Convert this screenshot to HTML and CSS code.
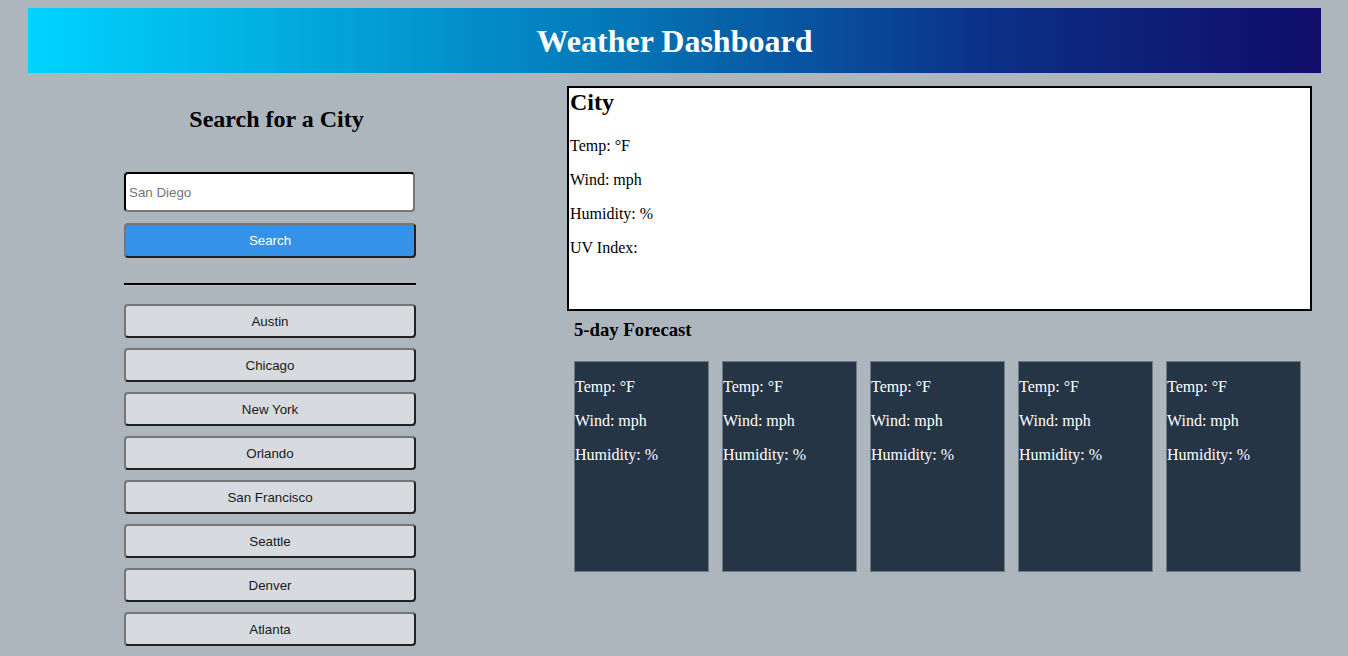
FILE: index.html
```html
<!DOCTYPE html>
<html lang="en">
<head>
<meta charset="utf-8">
<title>Weather Dashboard</title>
<link rel="stylesheet" href="styles.css">
</head>
<body>
<header class="banner">
  <h1 class="banner-title">Weather Dashboard</h1>
</header>
<main class="layout">
  <aside class="sidebar">
    <h2 class="sidebar-title">Search for a City</h2>
    <div class="search-panel">
      <input class="city-input" type="text" placeholder="San Diego">
      <button class="search-btn">Search</button>
      <hr class="divider">
      <div class="history">
        <button class="city-btn">Austin</button>
        <button class="city-btn">Chicago</button>
        <button class="city-btn">New York</button>
        <button class="city-btn">Orlando</button>
        <button class="city-btn">San Francisco</button>
        <button class="city-btn">Seattle</button>
        <button class="city-btn">Denver</button>
        <button class="city-btn">Atlanta</button>
      </div>
    </div>
  </aside>
  <section class="content">
    <div class="current">
      <h2 class="current-city">City</h2>
      <p class="stat">Temp: °F</p>
      <p class="stat">Wind: mph</p>
      <p class="stat">Humidity: %</p>
      <p class="stat">UV Index:</p>
    </div>
    <h3 class="forecast-title">5-day Forecast</h3>
    <div class="forecast">
      <div class="day-card"><p class="stat">Temp: °F</p><p class="stat">Wind: mph</p><p class="stat">Humidity: %</p></div>
      <div class="day-card"><p class="stat">Temp: °F</p><p class="stat">Wind: mph</p><p class="stat">Humidity: %</p></div>
      <div class="day-card"><p class="stat">Temp: °F</p><p class="stat">Wind: mph</p><p class="stat">Humidity: %</p></div>
      <div class="day-card"><p class="stat">Temp: °F</p><p class="stat">Wind: mph</p><p class="stat">Humidity: %</p></div>
      <div class="day-card"><p class="stat">Temp: °F</p><p class="stat">Wind: mph</p><p class="stat">Humidity: %</p></div>
    </div>
  </section>
</main>
</body>
</html>
```
FILE: styles.css
```css
html, body {
  background: #adb5bd;
}
body {
  margin: 8px 0;
  font-family: "Liberation Serif", "Times New Roman", serif;
  color: #000;
}
.banner {
  margin: 0 27px 0 28px;
  height: 65px;
  display: flex;
  align-items: center;
  justify-content: center;
  background: linear-gradient(90deg, #00d4ff 0%, #0478b8 45%, #0b2f86 75%, #100c6a 100%);
}
.banner-title {
  margin: 2px 0 0;
  color: #fff;
  font-size: 32px;
  font-weight: bold;
}
.layout {
  display: flex;
  padding-left: 28px;
}
.sidebar {
  width: 497px;
  flex: none;
  padding-top: 12px;
}
.sidebar-title {
  text-align: center;
  font-size: 24px;
  margin: 20px 0 0;
  line-height: 28px;
}
.search-panel {
  margin-left: 96px;
  width: 292px;
  padding-top: 39px;
}
.city-input {
  display: block;
  box-sizing: border-box;
  width: 291px;
  height: 40px;
  margin: 0;
  padding: 0 3px;
  border: 2px inset #767676;
  border-top-color: #333;
  border-left-color: #333;
  border-bottom-color: #777;
  border-right-color: #777;
  border-radius: 4px;
  background: #fff;
  font-family: "Liberation Sans", Arial, sans-serif;
  font-size: 13.33px;
}
.city-input::placeholder {
  color: #757575;
}
.search-btn,
.city-btn {
  display: block;
  box-sizing: border-box;
  width: 292px;
  margin: 0;
  border: 2px solid #222;
  border-top-color: #767676;
  border-left-color: #767676;
  border-radius: 4px;
  font-family: "Liberation Sans", Arial, sans-serif;
  font-size: 13.33px;
  text-align: center;
  padding: 0;
}
.search-btn {
  margin-top: 11px;
  height: 35px;
  background: #3493e9;
  color: #fff;
}
.divider {
  margin: 25px 0 0;
  border: 0;
  border-top: 2px solid #000;
  border-bottom: 1px solid #c5cad0;
  height: 0;
}
.history {
  display: flex;
  flex-direction: column;
  gap: 10px;
  padding-top: 18px;
}
.city-btn {
  height: 34px;
  background: #d7dadf;
  color: #1a1a1a;
}
.content {
  margin-left: 42px;
  width: 745px;
  padding-top: 13px;
}
.current {
  box-sizing: border-box;
  height: 225px;
  border: 2px solid #000;
  background: #fff;
  padding: 0 1px;
}
.current-city {
  margin: 0 0 21px;
  font-size: 24px;
  line-height: 28px;
}
.stat {
  margin: 16px 0;
  font-size: 16px;
  line-height: 18px;
}
.current-city + .stat {
  margin-top: 0;
}
.forecast-title {
  margin: 8px 0 0 7px;
  font-size: 18.72px;
  line-height: 22px;
}
.forecast {
  display: flex;
  gap: 13px;
  margin: 20px 0 0 7px;
}
.day-card {
  box-sizing: border-box;
  width: 135px;
  height: 211px;
  background: #263545;
  border: 1px solid #6f7a86;
  color: #fff;
}
.day-card .stat:first-child {
  margin-top: 16px;
}
```
